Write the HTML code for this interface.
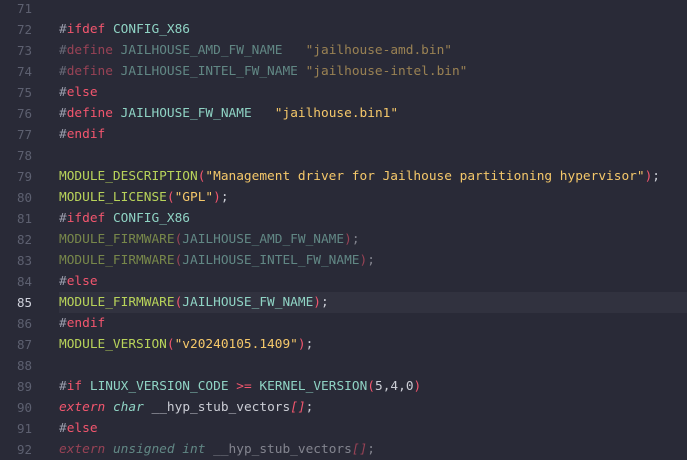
<!DOCTYPE html><html><head><style>
body{margin:0;background:#292a37;width:687px;height:455px;overflow:hidden;font-family:"DejaVu Sans Mono","Liberation Mono",monospace;font-size:12.8px}
.l{position:absolute;left:0;height:21px;line-height:21px;width:687px;white-space:pre;color:#d8dae0}
.n{position:absolute;left:0;width:32px;text-align:right;color:#5d6070;font-size:12.5px}
.c{position:absolute;left:59px}
.hl{position:absolute;left:59px;right:0;top:292px;height:21px;background:#31323f}
.h .n{color:#d0d2dc}
.k{color:#f3566e}.m{color:#b8d35a}.i{color:#8fd3c4}.s{color:#f5c86a}.p{color:#cbcdd5}.g{color:#9a9cab}
.d{opacity:.55}.it{font-style:italic}
</style></head><body>
<div class="hl"></div>
<div class="l" style="top:-2px"><span class="n">71</span></div>
<div class="l" style="top:19px"><span class="n">72</span><span class="c"><span class="g">#</span><span class="k">ifdef</span> <span class="i">CONFIG_X86</span></span></div>
<div class="l" style="top:40px"><span class="n">73</span><span class="c d"><span class="g">#</span><span class="k">define</span> <span class="i">JAILHOUSE_AMD_FW_NAME</span>   <span class="s">"jailhouse-amd.bin"</span></span></div>
<div class="l" style="top:61px"><span class="n">74</span><span class="c d"><span class="g">#</span><span class="k">define</span> <span class="i">JAILHOUSE_INTEL_FW_NAME</span> <span class="s">"jailhouse-intel.bin"</span></span></div>
<div class="l" style="top:82px"><span class="n">75</span><span class="c"><span class="g">#</span><span class="k">else</span></span></div>
<div class="l" style="top:103px"><span class="n">76</span><span class="c"><span class="g">#</span><span class="k">define</span> <span class="i">JAILHOUSE_FW_NAME</span>   <span class="s">"jailhouse.bin1"</span></span></div>
<div class="l" style="top:124px"><span class="n">77</span><span class="c"><span class="g">#</span><span class="k">endif</span></span></div>
<div class="l" style="top:145px"><span class="n">78</span></div>
<div class="l" style="top:166px"><span class="n">79</span><span class="c"><span class="m">MODULE_DESCRIPTION</span><span class="k">(</span><span class="s">"Management driver for Jailhouse partitioning hypervisor"</span><span class="k">)</span><span class="p">;</span></span></div>
<div class="l" style="top:187px"><span class="n">80</span><span class="c"><span class="m">MODULE_LICENSE</span><span class="k">(</span><span class="s">"GPL"</span><span class="k">)</span><span class="p">;</span></span></div>
<div class="l" style="top:208px"><span class="n">81</span><span class="c"><span class="g">#</span><span class="k">ifdef</span> <span class="i">CONFIG_X86</span></span></div>
<div class="l" style="top:229px"><span class="n">82</span><span class="c d"><span class="m">MODULE_FIRMWARE</span><span class="k">(</span><span class="i">JAILHOUSE_AMD_FW_NAME</span><span class="k">)</span><span class="p">;</span></span></div>
<div class="l" style="top:250px"><span class="n">83</span><span class="c d"><span class="m">MODULE_FIRMWARE</span><span class="k">(</span><span class="i">JAILHOUSE_INTEL_FW_NAME</span><span class="k">)</span><span class="p">;</span></span></div>
<div class="l" style="top:271px"><span class="n">84</span><span class="c"><span class="g">#</span><span class="k">else</span></span></div>
<div class="l h" style="top:292px"><span class="n">85</span><span class="c"><span class="m">MODULE_FIRMWARE</span><span class="k">(</span><span class="i">JAILHOUSE_FW_NAME</span><span class="k">)</span><span class="p">;</span></span></div>
<div class="l" style="top:313px"><span class="n">86</span><span class="c"><span class="g">#</span><span class="k">endif</span></span></div>
<div class="l" style="top:334px"><span class="n">87</span><span class="c"><span class="m">MODULE_VERSION</span><span class="k">(</span><span class="s">"v20240105.1409"</span><span class="k">)</span><span class="p">;</span></span></div>
<div class="l" style="top:355px"><span class="n">88</span></div>
<div class="l" style="top:376px"><span class="n">89</span><span class="c"><span class="g">#</span><span class="k">if</span> <span class="i">LINUX_VERSION_CODE</span> <span class="k">&gt;=</span> <span class="i">KERNEL_VERSION</span><span class="k">(</span><span class="p">5,4,0</span><span class="k">)</span></span></div>
<div class="l" style="top:397px"><span class="n">90</span><span class="c"><span class="k it">extern</span> <span class="i it">char</span> <span class="p">__hyp_stub_vectors</span><span class="k it">[]</span><span class="p">;</span></span></div>
<div class="l" style="top:418px"><span class="n">91</span><span class="c"><span class="g">#</span><span class="k">else</span></span></div>
<div class="l" style="top:439px"><span class="n">92</span><span class="c d"><span class="k it">extern</span> <span class="i it">unsigned int</span> <span class="p">__hyp_stub_vectors</span><span class="k it">[]</span><span class="p">;</span></span></div>
</body></html>
